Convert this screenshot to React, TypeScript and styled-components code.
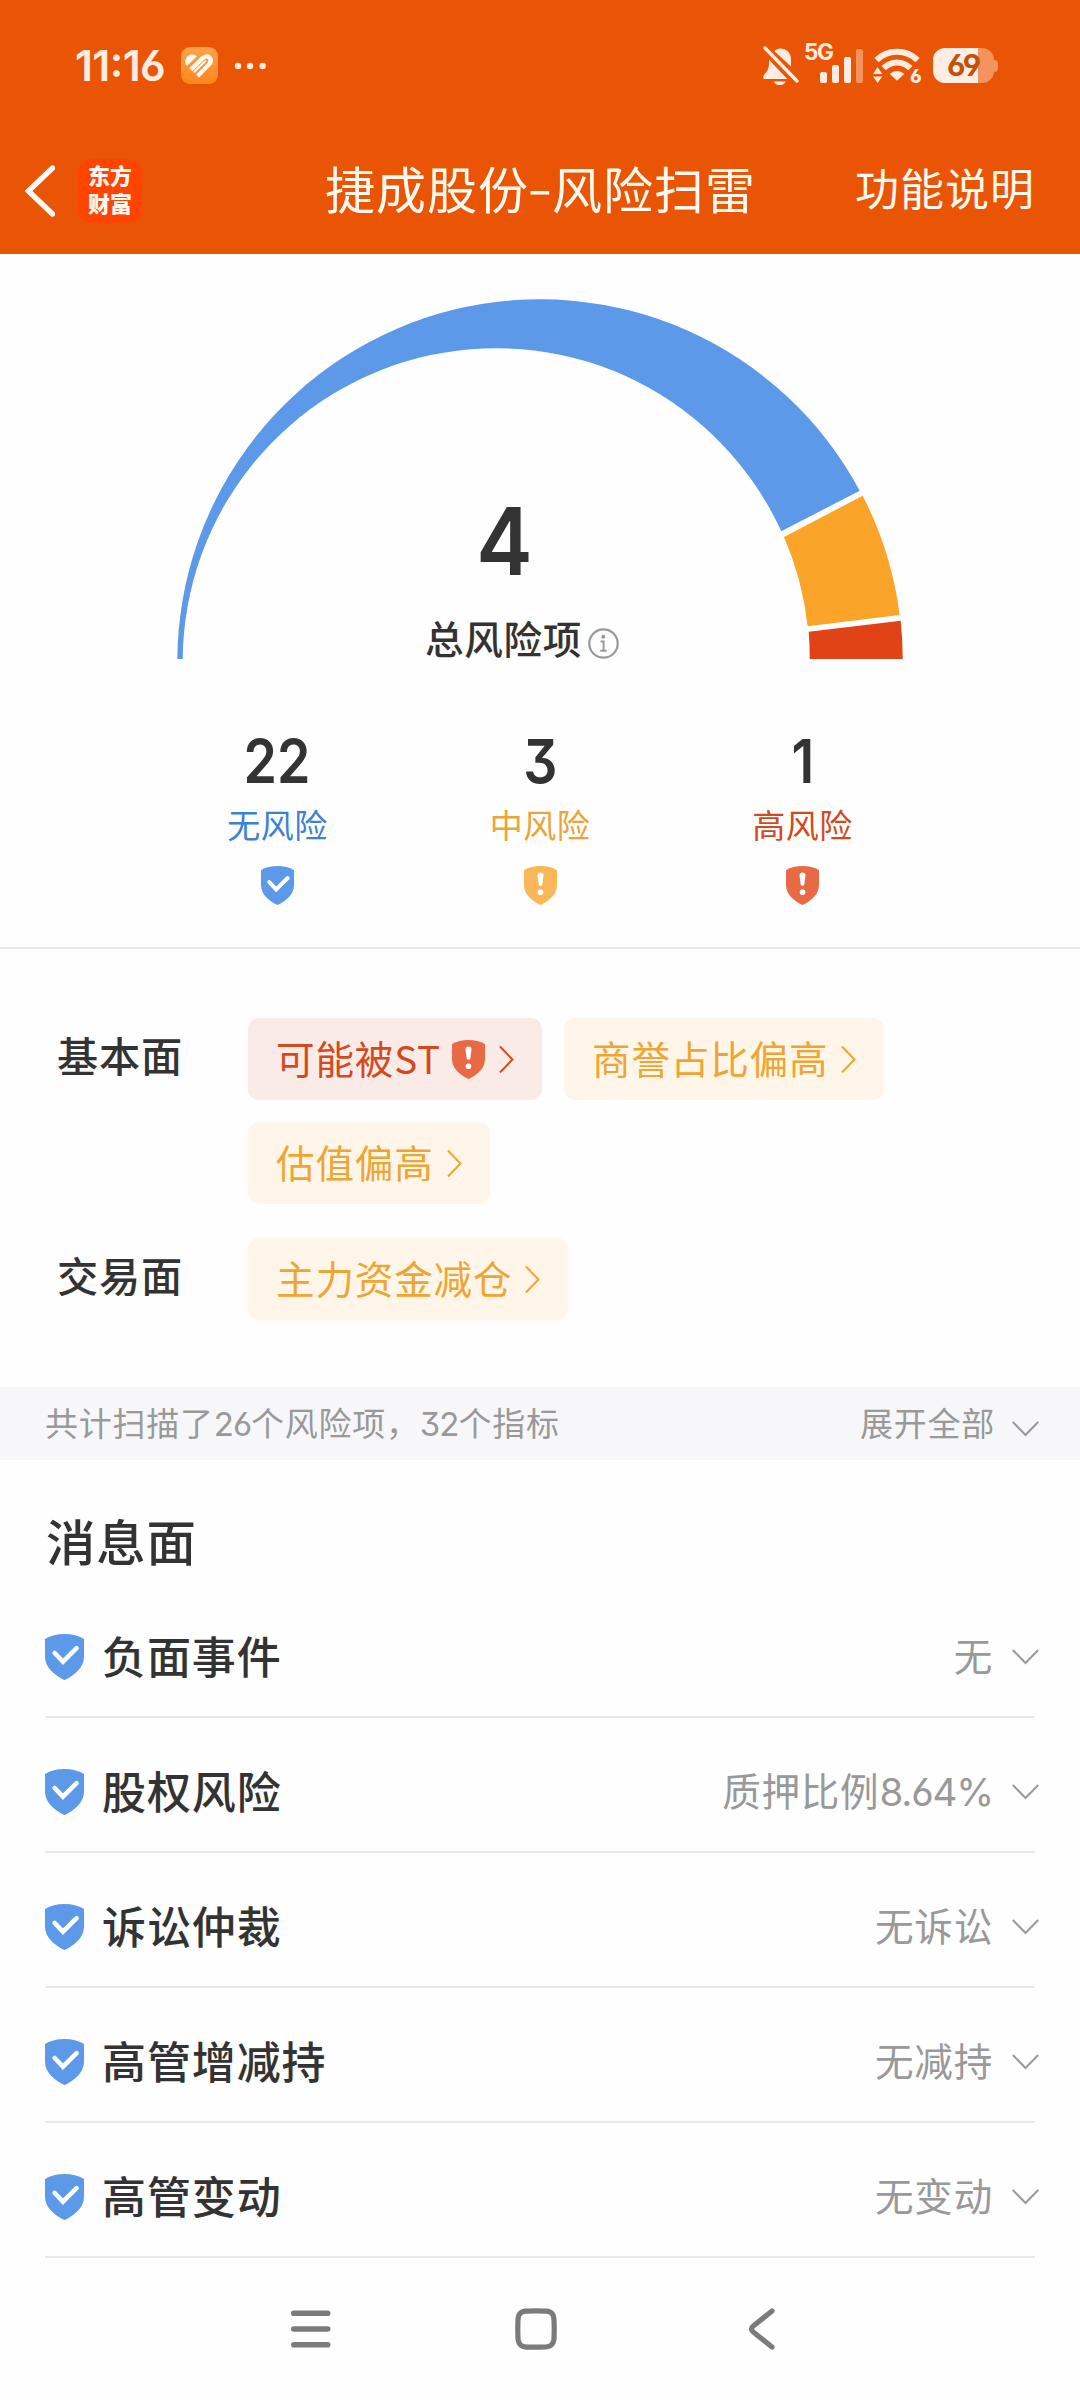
import React from "react";
import styled, { createGlobalStyle } from "styled-components";

const SANS = '"Noto Sans CJK SC", "Noto Sans", sans-serif';
const NUM = 'Inter, "Noto Sans CJK SC", sans-serif';
const BLUE = "#5c99e8";
const AMBER = "#fab757";
const RED = "#e86a45";
const INK = "#333333";
const GREY = "#999999";

const GlobalStyle = createGlobalStyle`
  * { box-sizing: border-box; }
  body { margin: 0; background: #fefefe; }
  svg { display: block; flex: none; }
`;

const Page = styled.div`
  width: 1080px;
  height: 2400px;
  overflow: hidden;
  display: flex;
  flex-direction: column;
  background: #fefefe;
  color: ${INK};
  font-family: ${SANS};
  white-space: nowrap;
`;

/* ---------- header ---------- */

const Header = styled.header`
  height: 254px;
  background: #e95504;
  color: #fff9f0;
`;

const StatusBar = styled.div`
  height: 131px;
  padding: 0 82px 0 75px;
  display: flex;
  align-items: center;
  justify-content: space-between;
`;

const StatusGroup = styled.div`
  display: flex;
  align-items: center;
`;

const Clock = styled.span`
  width: 106px;
  font: 600 42.5px/44px ${NUM};
  font-feature-settings: "cv03", "case";
  letter-spacing: -0.6px;
  color: #ffece0;
`;

const Signal = styled.div`
  height: 46px;
  margin-left: 5px;
  padding-bottom: 6px;
  display: flex;
  align-items: flex-end;
`;

const Network = styled.span`
  align-self: flex-start;
  width: 16px;
  font: 700 22.5px/18px ${NUM};
  letter-spacing: -1.4px;
  color: #ffece0;
`;

const SignalBar = styled.i<{ $h: number; $dim?: boolean }>`
  width: 7px;
  height: ${(p) => p.$h}px;
  margin-right: 5px;
  border-radius: 2px;
  background: ${(p) => (p.$dim ? "#f5935f" : "#ffece0")};
`;

const Battery = styled.div`
  width: 61px;
  height: 35px;
  margin-left: 12px;
  padding-left: 14px;
  border-radius: 12px;
  background: linear-gradient(90deg, #ffede4 45px, #f5935f 45px);
  color: #c4500e;
  font: 700 30px/35px ${NUM};
  font-feature-settings: "cv03", "cv04";
  letter-spacing: -2px;
`;

const BatteryNub = styled.i`
  width: 4px;
  height: 12px;
  border-radius: 0 5px 5px 0;
  background: #f5935f;
`;

const NavBar = styled.div`
  height: 119px;
  padding: 0 45px 0 25px;
  display: grid;
  grid-template-columns: 300px 1fr 180px;
  align-items: center;
`;

const NavLeft = styled.div`
  display: flex;
  align-items: center;
  gap: 23px;
`;

const Brand = styled.div`
  width: 64px;
  height: 64px;
  border-radius: 14px;
  background: #ff4400;
  color: #fff4ee;
  display: flex;
  flex-direction: column;
  align-items: center;
  padding-top: 1px;
  font: 900 22px/28px ${SANS};
`;

const Title = styled.h1`
  margin: 0 0 7px;
  display: flex;
  font: 400 50px/60px ${SANS};
  letter-spacing: 1px;
`;

const Dash = styled.span`
  width: 23px;
  display: flex;
  justify-content: center;
  transform: translateY(-2px) scaleX(1.45);
`;

const NavAction = styled.span`
  margin-bottom: 7px;
  font-size: 44px;
  letter-spacing: 1px;
  line-height: 54px;
`;

/* ---------- gauge ---------- */

const Summary = styled.section`
  height: 695px;
  padding-top: 44px;
  border-bottom: 2px solid #e9e9e9;
`;

const Gauge = styled.div`
  display: grid;
  width: 726px;
  margin: 0 auto;
  > * { grid-area: 1 / 1; }
`;

const GaugeCenter = styled.div`
  align-self: end;
  display: flex;
  align-items: flex-end;
  margin-left: 248px;
  padding-bottom: 2px;
  gap: 6px;
`;

const Total = styled.div`
  display: flex;
  flex-direction: column;
  align-items: center;
`;

const TotalNumber = styled.strong`
  font: 600 94px/94px ${NUM};
  transform: translate(1px, 7px) scaleX(0.9);
`;

const TotalLabel = styled.span`
  margin-top: 36px;
  font: 500 38.6px/40px ${SANS};
  letter-spacing: 0.7px;
`;

const Stats = styled.div`
  margin-top: 68px;
  display: grid;
  grid-template-columns: repeat(3, 262.5px);
  justify-content: center;
  justify-items: center;
`;

const Stat = styled.div`
  display: flex;
  flex-direction: column;
  align-items: center;
`;

const StatNumber = styled.strong`
  font: 600 61px/60px ${NUM};
  font-feature-settings: "cv09";
  transform: translateY(4px) scaleX(0.88);
`;

const StatLabel = styled.span<{ $color: string }>`
  margin: 20px 0 25px;
  font-size: 33px;
  letter-spacing: 0.5px;
  line-height: 35px;
  height: 34px;
  color: ${(p) => p.$color};
`;

/* ---------- tags ---------- */

const TagSection = styled.section`
  height: 438px;
  padding: 69px 57px 0;
  display: flex;
  flex-direction: column;
  gap: 34px;
`;

const TagGroup = styled.div`
  display: flex;
`;

const TagTitle = styled.h2`
  margin: 0;
  width: 191px;
  flex: none;
  font: 500 41.2px/73px ${SANS};
  letter-spacing: 0.8px;
`;

const TagList = styled.div`
  display: flex;
  flex-wrap: wrap;
  gap: 22px;
`;

const Tag = styled.button<{ $high?: boolean }>`
  height: 82px;
  padding: 0 28px;
  border: 0;
  border-radius: 11px;
  display: flex;
  align-items: center;
  background: ${(p) => (p.$high ? "#fbebe7" : "#fff6e9")};
  color: ${(p) => (p.$high ? "#d24a1e" : "#eea633")};
  font: 400 38.6px/48px ${SANS};
  letter-spacing: 0.8px;
  > svg { margin-left: ${(p) => (p.$high ? 11 : 13)}px; }
  > svg + svg { margin-left: 14px; }
`;

const TagText = styled.span`
  padding-bottom: 4px;
`;

/* ---------- list ---------- */

const ScanBar = styled.div`
  height: 73px;
  padding: 0 41px 0 45px;
  display: flex;
  justify-content: space-between;
  align-items: center;
  background: #f7f7fa;
  color: ${GREY};
  font-size: 33px;
  letter-spacing: 0.75px;
  line-height: 44px;
`;

const ScanText = styled.span`
  padding-bottom: 4px;
`;

const Digits = styled.span`
  font-family: ${NUM};
  font-feature-settings: "cv09", "cv03";
  line-height: 0;
  letter-spacing: -0.03em;
`;

const Expand = styled.span`
  display: flex;
  align-items: center;
  gap: 17px;
  > svg { margin-top: 10px; }
`;

const SectionTitle = styled.h2`
  margin: 0;
  height: 123px;
  padding: 54px 46px 0;
  font: 500 49.4px/52px ${SANS};
  letter-spacing: 0.8px;
`;

const Row = styled.div`
  height: 135px;
  margin: 0 45px;
  padding-top: 15px;
  display: flex;
  align-items: center;
  border-bottom: 2px solid #e9e9e9;
  > svg:last-child { margin: 0 -4px 0 19px; }
`;

const RowName = styled.span`
  margin-left: 18px;
  padding-bottom: 5px;
  font: 500 44px/54px ${SANS};
  letter-spacing: 0.9px;
`;

const RowValue = styled.span`
  margin-left: auto;
  padding-bottom: 6px;
  color: ${GREY};
  font: 400 38.6px/50px ${SANS};
  letter-spacing: 0.75px;
`;

const SystemNav = styled.nav`
  flex: 1;
  padding-left: 290px;
  display: flex;
  align-items: center;
`;

/* ---------- drawings ---------- */

const SHIELD = "M16.5 0C10.3 0 4.6 1.2 0 4.2V19.5C0 28.5 8.5 35.3 16.5 39C24.5 35.3 33 28.5 33 19.5V4.2C28.4 1.2 22.7 0 16.5 0Z";

function Shield({ kind, w = 33 }: { kind: "ok" | "mid" | "high"; w?: number }) {
  const fill = kind === "ok" ? BLUE : kind === "mid" ? AMBER : RED;
  return (
    <svg width={w} height={(w * 39) / 33} viewBox="0 0 33 39">
      <path d={SHIELD} fill={fill} />
      {kind === "ok" ? (
        <path d="M8.2 16.1L15.2 23.4L26.7 12" fill="none" stroke="#fff" strokeWidth="3.9" strokeLinecap="round" strokeLinejoin="miter" />
      ) : (
        <>
          <path d="M13.5 9.5a3 3 0 0 1 6 0L18.3 18.4a1.85 1.85 0 0 1-3.6 0Z" fill="#fff" />
          <circle cx="16.5" cy="26.2" r="2.8" fill="#fff" />
        </>
      )}
    </svg>
  );
}

const ChevronRight = () => (
  <svg width="15" height="28" viewBox="0 0 15 28">
    <path d="M1 1.5L13.5 14.5L1 27.5" fill="none" stroke="currentColor" strokeWidth="2" />
  </svg>
);

const ChevronDown = () => (
  <svg width="27" height="16" viewBox="0 0 27 16">
    <path d="M0.8 1L13.5 14L26.2 1" fill="none" stroke={GREY} strokeWidth="2" />
  </svg>
);

const GaugeChart = () => (
  <svg width="726" height="361" viewBox="177 298 726 361">
    <path d="M177.3 659A362.7 362.7 0 0 1 859.7 490.7L781.3 531.3A313.5 313.5 0 0 0 182.7 659Z" fill={BLUE} />
    <path d="M862.7 495.7A362.7 362.7 0 0 1 899.7 615L807.7 626.3A313.5 313.5 0 0 0 784 537Z" fill="#faa52a" />
    <path d="M900.7 620.7A362.7 362.7 0 0 1 902.7 659H809.7A313.5 313.5 0 0 0 808.7 631.7Z" fill="#e04315" />
  </svg>
);

const InfoSvg = styled.svg`
  margin-bottom: -2px;
`;

const InfoIcon = () => (
  <InfoSvg width="31" height="31" viewBox="0 0 31 31">
    <circle cx="15.5" cy="15.5" r="14.2" fill="none" stroke={GREY} strokeWidth="2.2" />
    <circle cx="15.3" cy="8.8" r="2" fill={GREY} />
    <path d="M12.5 13.5H15.6V22.5M12.3 22.8H18.6" fill="none" stroke={GREY} strokeWidth="2" />
  </InfoSvg>
);

const AppBadge = () => (
  <svg width="37" height="37" viewBox="0 0 37 37">
    <defs>
      <linearGradient id="badge" x1="0" y1="0" x2="0" y2="1">
        <stop offset="0" stopColor="#ffa24c" />
        <stop offset="1" stopColor="#ff861c" />
      </linearGradient>
    </defs>
    <rect width="37" height="37" rx="9" fill="url(#badge)" />
    <path d="M5.2 18.2C2.6 13 5.6 7.4 11 7.4C13 7.4 14.8 8 16 9.2L6.4 18.4Z" fill="#fffaf0" />
    <path d="M9.8 22.6L21.6 11.2C24.2 8.8 27 8.9 28.7 10.8C30.4 12.8 30 15.2 28 17.2L16.6 29" fill="none" stroke="#fffaf0" strokeWidth="4.4" />
    <path d="M14.6 26.4L26 15" stroke="#ff9434" strokeWidth="1.6" />
    <path d="M12.9 25.2L24.8 13.6" stroke="#fffaf0" strokeWidth="2" />
  </svg>
);

const DotsSvg = styled.svg`
  margin-left: 16px;
`;

const Dots = () => (
  <DotsSvg width="32" height="8" viewBox="0 0 32 8">
    <circle cx="4" cy="4" r="3.2" fill="#ffece0" />
    <circle cx="16" cy="4" r="3.2" fill="#ffece0" />
    <circle cx="28.6" cy="4" r="3.2" fill="#ffece0" />
  </DotsSvg>
);

const MutedBell = () => (
  <svg width="36" height="40" viewBox="0 0 36 40">
    <g fill="#ffece0">
      <path d="M11.5 5.2C13.2 3.3 14.8 2.4 17 2.4C23.5 2.4 28 7 28 13V20.6Z" />
      <path d="M6 13.8L24.3 33H1.2C-0.3 32.4 0 30.4 1.3 28.6C4.5 25 6 22 6 18Z" />
      <path d="M10.8 35.4H22.6C21.3 38 19.4 39 16.7 39C14 39 12.1 38 10.8 35.4Z" />
      <path d="M2 2L34 35" stroke="#ffece0" strokeWidth="3.4" strokeLinecap="round" />
    </g>
  </svg>
);

const WifiBox = styled.div`
  display: flex;
  margin-left: 5px;
  height: 38px;
`;

const WifiGeneration = styled.span`
  margin-left: -11px;
  padding-top: 19px;
  width: 11px;
  font: 800 18.5px/20px ${NUM};
  font-feature-settings: "cv03";
  color: #ffece0;
`;

const Wifi = () => (
  <WifiBox>
    <svg width="48" height="38" viewBox="0 0 48 38">
      <g fill="none" stroke="#ffece0" strokeWidth="6">
        <path d="M3.5 13.2C14.5 1.8 33.5 1.8 44.5 13.2" />
        <path d="M10.6 21.2C18.2 13.5 29.8 13.5 37.4 21.2" />
      </g>
      <g fill="#ffece0">
        <path d="M16.8 27C20.5 23.1 27.5 23.1 31.2 27L24 33.8Z" />
        <path d="M0 27L4.5 20L9.3 27Z" />
        <path d="M0 29.5H9.3L4.5 36Z" />
      </g>
    </svg>
    <WifiGeneration>6</WifiGeneration>
  </WifiBox>
);

const HomeSvg = styled.svg`
  margin-left: 184px;
`;

const BackSvg = styled.svg`
  margin-left: 191px;
`;

const rows: [string, string, string?][] = [
  ["负面事件", "无"],
  ["股权风险", "质押比例", "8.64%"],
  ["诉讼仲裁", "无诉讼"],
  ["高管增减持", "无减持"],
  ["高管变动", "无变动"],
];

export default function App() {
  return (
    <Page>
      <GlobalStyle />
      <Header>
        <StatusBar>
          <StatusGroup>
            <Clock>11:16</Clock>
            <AppBadge />
            <Dots />
          </StatusGroup>
          <StatusGroup>
            <MutedBell />
            <Signal>
              <Network>5G</Network>
              <SignalBar $h={11} />
              <SignalBar $h={18} />
              <SignalBar $h={26} />
              <SignalBar $h={34} $dim />
            </Signal>
            <Wifi />
            <Battery>69</Battery>
            <BatteryNub />
          </StatusGroup>
        </StatusBar>
        <NavBar>
          <NavLeft>
            <svg width="30" height="52" viewBox="0 0 30 52">
              <path d="M27.5 3L3.5 26L27.5 49" fill="none" stroke="#fffaf5" strokeWidth="5.4" strokeLinecap="round" />
            </svg>
            <Brand>
              <span>东方</span>
              <span>财富</span>
            </Brand>
          </NavLeft>
          <Title>
            捷成股份<Dash>-</Dash>风险扫雷
          </Title>
          <NavAction>功能说明</NavAction>
        </NavBar>
      </Header>

      <Summary>
        <Gauge>
          <GaugeChart />
          <GaugeCenter>
            <Total>
              <TotalNumber>4</TotalNumber>
              <TotalLabel>总风险项</TotalLabel>
            </Total>
            <InfoIcon />
          </GaugeCenter>
        </Gauge>
        <Stats>
          <Stat>
            <StatNumber>22</StatNumber>
            <StatLabel $color="#3b82d2">无风险</StatLabel>
            <Shield kind="ok" />
          </Stat>
          <Stat>
            <StatNumber>3</StatNumber>
            <StatLabel $color="#eba437">中风险</StatLabel>
            <Shield kind="mid" />
          </Stat>
          <Stat>
            <StatNumber>1</StatNumber>
            <StatLabel $color="#d2491e">高风险</StatLabel>
            <Shield kind="high" />
          </Stat>
        </Stats>
      </Summary>

      <TagSection>
        <TagGroup>
          <TagTitle>基本面</TagTitle>
          <TagList>
            <Tag $high>
              <TagText>可能被ST</TagText>
              <Shield kind="high" />
              <ChevronRight />
            </Tag>
            <Tag>
              <TagText>商誉占比偏高</TagText>
              <ChevronRight />
            </Tag>
            <Tag>
              <TagText>估值偏高</TagText>
              <ChevronRight />
            </Tag>
          </TagList>
        </TagGroup>
        <TagGroup>
          <TagTitle>交易面</TagTitle>
          <TagList>
            <Tag>
              <TagText>主力资金减仓</TagText>
              <ChevronRight />
            </Tag>
          </TagList>
        </TagGroup>
      </TagSection>

      <ScanBar>
        <ScanText>
          共计扫描了<Digits>26</Digits>个风险项，<Digits>32</Digits>个指标
        </ScanText>
        <Expand>
          <ScanText>展开全部</ScanText>
          <ChevronDown />
        </Expand>
      </ScanBar>

      <SectionTitle>消息面</SectionTitle>
      {rows.map(([name, value, ratio]) => (
        <Row key={name}>
          <Shield kind="ok" w={39} />
          <RowName>{name}</RowName>
          <RowValue>
            {value}
            {ratio && <Digits>{ratio}</Digits>}
          </RowValue>
          <ChevronDown />
        </Row>
      ))}

      <SystemNav>
        <svg width="41" height="40" viewBox="0 0 41 40">
          <path d="M3.8 4.3H37.7M3.8 20H37.7M3.8 35.7H37.7" stroke="#7b7b7b" strokeWidth="5.6" strokeLinecap="round" />
        </svg>
        <HomeSvg width="42" height="42" viewBox="0 0 42 42">
          <path d="M21 2.8C32 2.8 34.5 3 36.7 5.2S39.2 10 39.2 21S39 34.5 36.7 36.7S32 39.2 21 39.2S7.5 39 5.3 36.7S2.8 32 2.8 21S3 7.5 5.3 5.2S10 2.8 21 2.8Z" fill="none" stroke="#7b7b7b" strokeWidth="5.2" />
        </HomeSvg>
        <BackSvg width="27" height="42" viewBox="0 0 27 42">
          <path d="M24 3L5 18.3Q1.8 21 5 23.7L24 39" fill="none" stroke="#7b7b7b" strokeWidth="5.2" strokeLinecap="round" />
        </BackSvg>
      </SystemNav>
    </Page>
  );
}
